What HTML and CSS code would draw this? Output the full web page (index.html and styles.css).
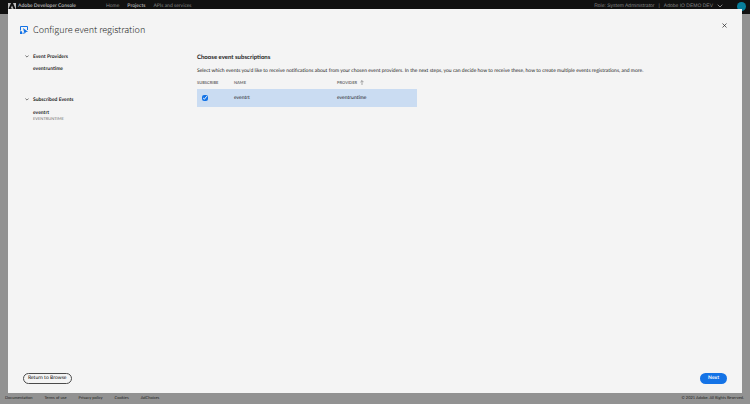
FILE: index.html
```html
<!DOCTYPE html>
<html lang="en">
<head>
<meta charset="utf-8">
<title>Configure event registration</title>
<link rel="stylesheet" href="styles.css">
</head>
<body>
<header class="topbar">
  <a class="brand" href="#">
    <svg class="brand-logo" viewBox="0 0 8 7" aria-hidden="true"><path d="M0 0h3L0 7zM5 0h3v7zM4 2.4 6 7H4.700L4.100 5.600H2.700z"/></svg>
    <span>Adobe Developer Console</span>
  </a>
  <nav class="topnav">
    <a href="#">Home</a>
    <a class="current" href="#">Projects</a>
    <a href="#">APIs and services</a>
  </nav>
  <div class="account">
    <span>Role: System Administrator</span>
    <span>|</span>
    <button class="org" type="button">Adobe IO DEMO DEV
      <svg class="org-arrow" viewBox="0 0 6 4" aria-hidden="true"><path d="M.7.7 3 3 5.300.7"/></svg>
    </button>
    <span class="avatar"></span>
  </div>
</header>
<footer class="footer">
  <nav class="footer-links">
    <a href="#">Documentation</a>
    <a href="#">Terms of use</a>
    <a href="#">Privacy policy</a>
    <a href="#">Cookies</a>
    <a href="#">AdChoices</a>
  </nav>
  <span>© 2021 Adobe. All Rights Reserved.</span>
</footer>

<section class="dialog" role="dialog" aria-labelledby="dialog-title">
  <div class="dialog-head">
    <svg class="event-icon" viewBox="0 0 8 8" aria-hidden="true">
      <path class="event-frame" d="M.5 4.500V.5h7V4"/>
      <path class="event-fill" d="M3 2 8 5.700 6 6.100 4.600 8zM0 5.300h2V8H0zM2.600 6.500h1V8h-1z"/>
    </svg>
    <h1 id="dialog-title">Configure event registration</h1>
    <button class="close" type="button" aria-label="Close">
      <svg viewBox="0 0 5 5" aria-hidden="true"><path d="m.5.5 4 4m0-4-4 4"/></svg>
    </button>
  </div>
  <div class="dialog-body">
    <aside class="side">
      <section class="group">
        <h3><svg viewBox="0 0 4 3" aria-hidden="true"><path d="m.4.5 1.600 1.600L3.600.5"/></svg>Event Providers</h3>
        <p class="item">eventruntime</p>
      </section>
      <section class="group">
        <h3><svg viewBox="0 0 4 3" aria-hidden="true"><path d="m.4.5 1.600 1.600L3.600.5"/></svg>Subscribed Events</h3>
        <p class="item subscribed">eventrt<small>EVENTRUNTIME</small></p>
      </section>
    </aside>
    <div class="content">
      <h2>Choose event subscriptions</h2>
      <p class="intro">Select which events you'd like to receive notifications about from your chosen event providers. In the next steps, you can decide how to receive these, how to create multiple events registrations, and more.</p>
      <table class="events">
        <thead>
          <tr>
            <th class="col-subscribe" scope="col">SUBSCRIBE</th>
            <th class="col-name" scope="col">NAME</th>
            <th scope="col">PROVIDER <svg viewBox="0 0 4 5" aria-hidden="true"><path d="M2 5V.6M.4 2.200 2 .6l1.600 1.600"/></svg></th>
          </tr>
        </thead>
        <tbody>
          <tr>
            <td class="pick"><input type="checkbox" aria-label="Subscribe to eventrt" checked></td>
            <td>eventrt</td>
            <td>eventruntime</td>
          </tr>
        </tbody>
      </table>
    </div>
  </div>
  <div class="dialog-actions">
    <button class="button outline" type="button">Return to Browse</button>
    <button class="button primary" type="button">Next</button>
  </div>
</section>
</body>
</html>
```
FILE: styles.css
```css
* { box-sizing: border-box; }
body {
  margin: 0;
  min-height: 100vh;
  display: flex;
  flex-direction: column;
  justify-content: space-between;
  background: #929292;
  color: #222;
  font: 5px/8px Lato, "Open Sans", sans-serif;
  text-rendering: geometricPrecision;
}
h1, h2, h3, p { margin: 0; }
a { color: inherit; text-decoration: none; }
button { font: inherit; color: inherit; padding: 0; border: 0; background: none; text-rendering: inherit; }
svg { display: block; fill: none; stroke: currentColor; }

.topbar {
  display: flex;
  align-items: center;
  height: 14px;
  padding: 0 4px 2px 8px;
  background: #111;
  color: #858585;
}
.brand {
  display: flex;
  align-items: center;
  gap: 2px;
  width: 98px;
  white-space: nowrap;
  color: #b0b0b0;
  font-weight: 700;
}
.brand-logo { width: 8px; height: 7px; fill: #bbb; stroke: none; }
.topnav { display: flex; gap: 8px; }
.current { color: #aaa; font-weight: 700; }
.account {
  display: flex;
  align-items: center;
  gap: 4px;
  margin-left: auto;
  font-family: "Liberation Sans", Arial, sans-serif;
}
.org { display: flex; align-items: center; gap: 4px; }
.org-arrow { width: 6px; height: 4px; }
.avatar { width: 9px; height: 9px; margin-left: 10px; border-radius: 50%; background: #087f9c; }

.footer {
  display: flex;
  justify-content: space-between;
  padding: 0 6px 2px 5px;
  font-size: 4px;
}
.footer-links { display: flex; gap: 12px; }

.dialog {
  position: fixed;
  inset: 9px 8px 11px;
  display: flex;
  flex-direction: column;
  padding: 12px 15px 9px 12px;
  background: #f4f4f4;
}
.dialog-head { display: flex; align-items: center; }
.event-icon { width: 8px; height: 8px; margin-right: 5px; }
.event-frame { stroke: #1473e6; }
.event-fill { fill: #1473e6; stroke: none; }
h1 { font: 300 9px/18px "Noto Sans CJK SC", Lato, sans-serif; }
.close { margin: 0 0 9px auto; }
.close svg { width: 5px; height: 5px; stroke-width: .7; }

.dialog-body { display: flex; flex: 1; padding-top: 14px; }
.side { width: 177px; padding-left: 5px; }
h3 { display: flex; align-items: center; gap: 4px; font-size: 5px; }
h3 svg { width: 4px; height: 3px; margin-bottom: 2px; stroke-width: .6; }
.group { height: 43px; }
.item { padding: 4px 0 0 8px; font-weight: 700; }
.subscribed { padding-top: 6px; line-height: 6px; }
.item small { display: block; font-size: 4px; font-weight: 400; color: #6e6e6e; }
.content { flex: 1; }
h2 { font-size: 6px; line-height: 10px; }
.intro { padding-top: 4px; }
.events { width: 220px; border-collapse: collapse; table-layout: fixed; }
.events th { height: 14px; padding: 1px 0 0; text-align: left; font-size: 4px; color: #6e6e6e; }
.events th svg { display: inline-block; width: 4px; height: 5px; margin-left: 2px; stroke-width: .6; vertical-align: middle; }
.events td { height: 18px; padding: 0; background: #cadcf2; }
.events .pick { padding-left: 5px; }
.col-subscribe { width: 37px; }
.col-name { width: 103px; }
input { display: block; width: 6px; height: 6px; margin: 0; accent-color: #1473e6; }

.dialog-actions { display: flex; justify-content: space-between; padding-left: 3px; }
.button { height: 11px; padding: 0 4px; border-radius: 6px; font-weight: 500; line-height: 9px; }
.outline { border: 1px solid #4b4b4b; }
.primary { padding: 0 8px; background: #1473e6; color: #fff; font-weight: 700; }
```
